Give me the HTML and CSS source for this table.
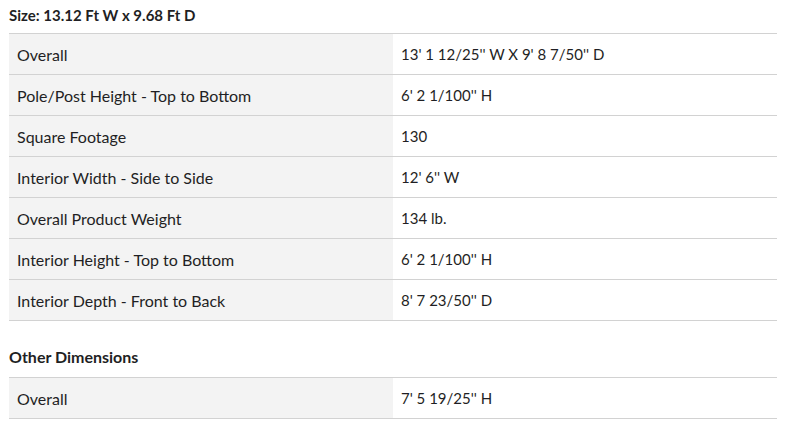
FILE: index.html
```html
<!DOCTYPE html>
<html>
<head>
<meta charset="utf-8">
<link rel="stylesheet" href="styles.css">
</head>
<body>
<div class="wrap">
  <h3 class="title">Size: 13.12 Ft W x 9.68 Ft D</h3>
  <table class="specs">
    <tr><td class="label">Overall</td><td class="value">13' 1 12/25'' W X 9' 8 7/50'' D</td></tr>
    <tr><td class="label">Pole/Post Height - Top to Bottom</td><td class="value">6' 2 1/100'' H</td></tr>
    <tr><td class="label">Square Footage</td><td class="value">130</td></tr>
    <tr><td class="label">Interior Width - Side to Side</td><td class="value">12' 6'' W</td></tr>
    <tr><td class="label">Overall Product Weight</td><td class="value">134 lb.</td></tr>
    <tr><td class="label">Interior Height - Top to Bottom</td><td class="value">6' 2 1/100'' H</td></tr>
    <tr><td class="label">Interior Depth - Front to Back</td><td class="value">8' 7 23/50'' D</td></tr>
  </table>
  <h3 class="title title-other">Other Dimensions</h3>
  <table class="specs">
    <tr><td class="label">Overall</td><td class="value">7' 5 19/25'' H</td></tr>
  </table>
</div>
</body>
</html>
```
FILE: styles.css
```css
html, body {
  margin: 0;
  padding: 0;
  background: #fff;
}
body {
  font-family: Lato, "Open Sans", sans-serif;
  color: #1f1f24;
}
.wrap {
  width: 768px;
  margin: 0 9px;
}
.title {
  margin: 0;
  font-size: 15px;
  font-weight: 700;
  line-height: 20px;
  padding-top: 5px;
  height: 33px;
  box-sizing: border-box;
}
.title-other {
  font-size: 16px;
  padding-top: 26px;
  height: 56px;
}
.specs {
  width: 100%;
  border-collapse: collapse;
  font-size: 16px;
}
.specs tr {
  border-top: 1px solid #d2d2d2;
  border-bottom: 1px solid #d2d2d2;
}
.specs td {
  height: 41px;
  padding: 0 8px;
  vertical-align: middle;
  box-sizing: border-box;
}
.label {
  width: 384px;
  background: #f3f3f3;
}
.value {
  padding-left: 7px;
  font-size: 15px;
}
```
